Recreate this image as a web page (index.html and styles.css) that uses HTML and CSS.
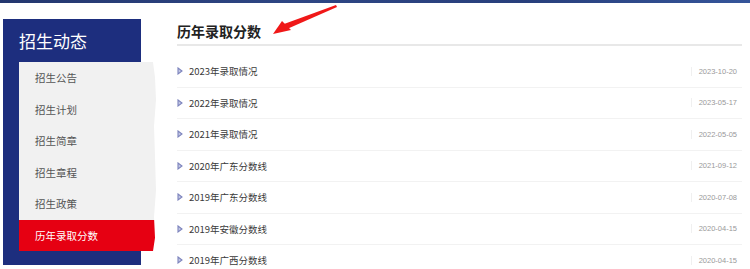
FILE: index.html
```html
<!DOCTYPE html>
<html lang="zh-CN">
<head>
  <meta charset="UTF-8">
  <title>历年录取分数</title>
  <link rel="stylesheet" href="styles.css">
</head>
<body>
  <div class="topbar"></div>

  <div class="page">
    <aside class="sidebar">
      <h2 class="sidebar-title">招生动态</h2>
      <ul class="side-menu">
        <li>招生公告</li>
        <li>招生计划</li>
        <li>招生简章</li>
        <li>招生章程</li>
        <li>招生政策</li>
        <li class="active">历年录取分数</li>
      </ul>
    </aside>

    <main class="content">
      <h1 class="content-title">历年录取分数</h1>
      <ul class="news-list">
        <li><svg class="tri" width="6" height="8" viewBox="0 0 6 8"><path d="M1 1 L5 4 L1 7 Z" fill="#c3c7e4" stroke="#7d84bd" stroke-width="1.1"/></svg><span class="name">2023年录取情况</span><span class="date">2023-10-20</span></li>
        <li><svg class="tri" width="6" height="8" viewBox="0 0 6 8"><path d="M1 1 L5 4 L1 7 Z" fill="#c3c7e4" stroke="#7d84bd" stroke-width="1.1"/></svg><span class="name">2022年录取情况</span><span class="date">2023-05-17</span></li>
        <li><svg class="tri" width="6" height="8" viewBox="0 0 6 8"><path d="M1 1 L5 4 L1 7 Z" fill="#c3c7e4" stroke="#7d84bd" stroke-width="1.1"/></svg><span class="name">2021年录取情况</span><span class="date">2022-05-05</span></li>
        <li><svg class="tri" width="6" height="8" viewBox="0 0 6 8"><path d="M1 1 L5 4 L1 7 Z" fill="#c3c7e4" stroke="#7d84bd" stroke-width="1.1"/></svg><span class="name">2020年广东分数线</span><span class="date">2021-09-12</span></li>
        <li><svg class="tri" width="6" height="8" viewBox="0 0 6 8"><path d="M1 1 L5 4 L1 7 Z" fill="#c3c7e4" stroke="#7d84bd" stroke-width="1.1"/></svg><span class="name">2019年广东分数线</span><span class="date">2020-07-08</span></li>
        <li><svg class="tri" width="6" height="8" viewBox="0 0 6 8"><path d="M1 1 L5 4 L1 7 Z" fill="#c3c7e4" stroke="#7d84bd" stroke-width="1.1"/></svg><span class="name">2019年安徽分数线</span><span class="date">2020-04-15</span></li>
        <li><svg class="tri" width="6" height="8" viewBox="0 0 6 8"><path d="M1 1 L5 4 L1 7 Z" fill="#c3c7e4" stroke="#7d84bd" stroke-width="1.1"/></svg><span class="name">2019年广西分数线</span><span class="date">2020-04-15</span></li>
      </ul>
    </main>
  </div>

  <!-- annotation arrow drawn over the page -->
  <svg class="arrow" width="750" height="60" viewBox="0 0 750 60">
    <path d="M336 5 L337 7 L287 29 L284 24 Z" fill="#f01818"/>
    <path d="M273 34 L282 21 L291 30 Z" fill="#f01818"/>
  </svg>
</body>
</html>
```

FILE: styles.css
```css
body {
  margin: 0;
  background-color: #fff;
  font-family: 'Noto Sans CJK SC', 'Microsoft YaHei', sans-serif;
  position: relative;
  overflow: hidden;
}

ul {
  list-style: none;
  margin: 0;
  padding: 0;
}

.topbar {
  height: 3px;
  background: linear-gradient(90deg, #24376f, #2e4684 40%, #283f7c 70%, #35559a);
}

.page {
  display: flex;
  align-items: flex-start;
  padding-top: 16px;
}

/* Sidebar */
.sidebar {
  margin-left: 3px;
  width: 138px;
  height: 246px;
  background-color: #1d2e7e;
  flex-shrink: 0;
}

.sidebar-title {
  margin: 0;
  height: 43px;
  padding-left: 16px;
  line-height: 43px;
  font-size: 17px;
  font-weight: normal;
  color: #fff;
}

.side-menu {
  margin-left: 16px;
  width: 137px;
  background-color: #f1f1f1;
  clip-path: polygon(0 0, 134px 0, 136px 8%, 137px 20%, 135px 34%, 136px 50%, 137px 68%, 135px 82%, 136px 93%, 134px 100%, 0 100%);
}

.side-menu li {
  height: 31.5px;
  line-height: 31.5px;
  padding-left: 16px;
  font-size: 10.5px;
  color: #555;
}

.side-menu li.active {
  background-color: #e60012;
  color: #fff;
}

/* Content */
.content {
  margin-left: 36px;
  width: 565px;
}

.content-title {
  margin: 0;
  height: 25px;
  line-height: 25px;
  font-size: 14px;
  font-weight: bold;
  color: #222;
  border-bottom: 2px solid #e8e8e8;
}

.news-list {
  margin-top: 10px;
}

.news-list li {
  display: flex;
  align-items: center;
  height: 30.5px;
  border-bottom: 1px solid #f2f2f2;
  padding-right: 5px;
}

.tri {
  margin-right: 6px;
  flex-shrink: 0;
}

.name {
  flex: 1;
  font-size: 9.5px;
  color: #3a3a3a;
}

.date {
  font-family: 'Liberation Sans', Arial, sans-serif;
  font-size: 7.5px;
  color: #999;
  padding-left: 7px;
  border-left: 1px solid #f0f0f0;
  line-height: 9px;
}

.arrow {
  position: absolute;
  left: 0;
  top: 0;
}
```
